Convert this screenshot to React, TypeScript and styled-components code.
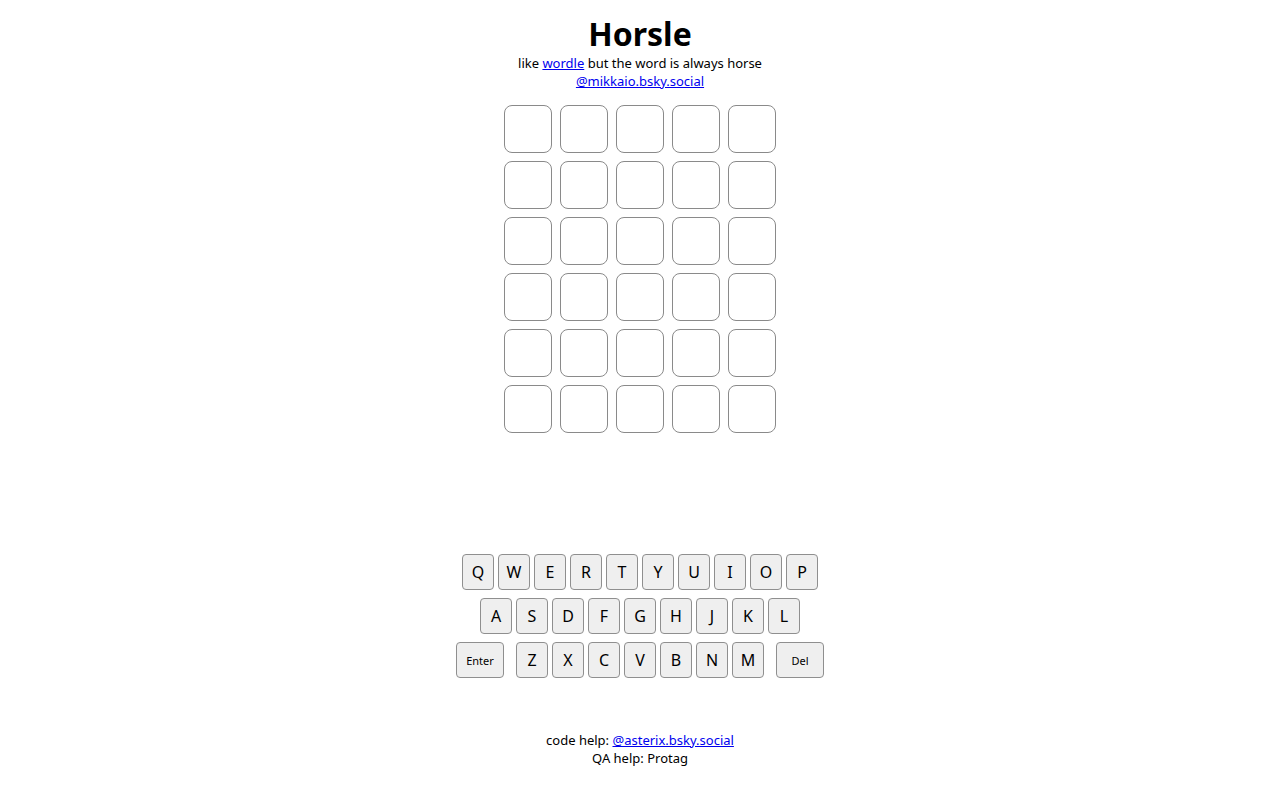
import React from 'react'
import styled, { createGlobalStyle } from 'styled-components'

const GlobalStyle = createGlobalStyle`
  html, body {
    margin: 0;
    background: #fff;
    color: #000;
    font-family: 'Noto Sans', 'DejaVu Sans', sans-serif;
  }
`

const Page = styled.main`
  align-items: center;
  display: flex;
  flex-direction: column;
  padding-top: 16px;
`

const Title = styled.h1`
  font-size: 32px;
  font-weight: 700;
  line-height: 36px;
  margin: 0 0 2px;
`

const Line = styled.p`
  font-size: 13px;
  line-height: 18px;
  margin: 0;
  text-align: center;

  a {
    color: #0000ee;
  }
`

const Board = styled.div`
  display: grid;
  gap: 8px;
  grid-template-columns: repeat(5, 48px);
  grid-auto-rows: 48px;
  margin-top: 15px;
`

const Tile = styled.div`
  border: 1px solid #8a8a8a;
  border-radius: 8px;
  box-sizing: border-box;
`

const Keyboard = styled.div`
  display: flex;
  flex-direction: column;
  gap: 8px;
  margin-top: 121px;
`

const KeyRow = styled.div`
  display: flex;
  gap: 4px;
  justify-content: center;
`

const Key = styled.button<{ $wide?: boolean; $side?: 'left' | 'right' }>`
  background: #efefef;
  border: 1px solid #8f8f8f;
  border-radius: 4px;
  box-sizing: border-box;
  color: #000;
  font-family: inherit;
  font-size: ${({ $wide }) => ($wide ? '11px' : '16px')};
  height: 36px;
  margin-left: ${({ $side }) => ($side === 'right' ? '8px' : '0')};
  margin-right: ${({ $side }) => ($side === 'left' ? '8px' : '0')};
  padding: 0;
  width: ${({ $wide }) => ($wide ? '48px' : '32px')};
`

const Footer = styled.footer`
  margin-top: 53px;
`

const rows = ['QWERTYUIOP', 'ASDFGHJKL', 'ZXCVBNM']

const App = () => (
  <Page>
    <GlobalStyle />
    <Title>Horsle</Title>
    <Line>
      like <a href="#">wordle</a> but the word is always horse
    </Line>
    <Line>
      <a href="#">@mikkaio.bsky.social</a>
    </Line>
    <Board>
      {Array.from({ length: 30 }, (_, i) => (
        <Tile key={i} />
      ))}
    </Board>
    <Keyboard>
      {rows.map((row, r) => (
        <KeyRow key={row}>
          {r === 2 && (
            <Key $wide $side="left">
              Enter
            </Key>
          )}
          {row.split('').map((k) => (
            <Key key={k}>{k}</Key>
          ))}
          {r === 2 && (
            <Key $wide $side="right">
              Del
            </Key>
          )}
        </KeyRow>
      ))}
    </Keyboard>
    <Footer>
      <Line>
        code help: <a href="#">@asterix.bsky.social</a>
      </Line>
      <Line>QA help: Protag</Line>
    </Footer>
  </Page>
)

export default App
